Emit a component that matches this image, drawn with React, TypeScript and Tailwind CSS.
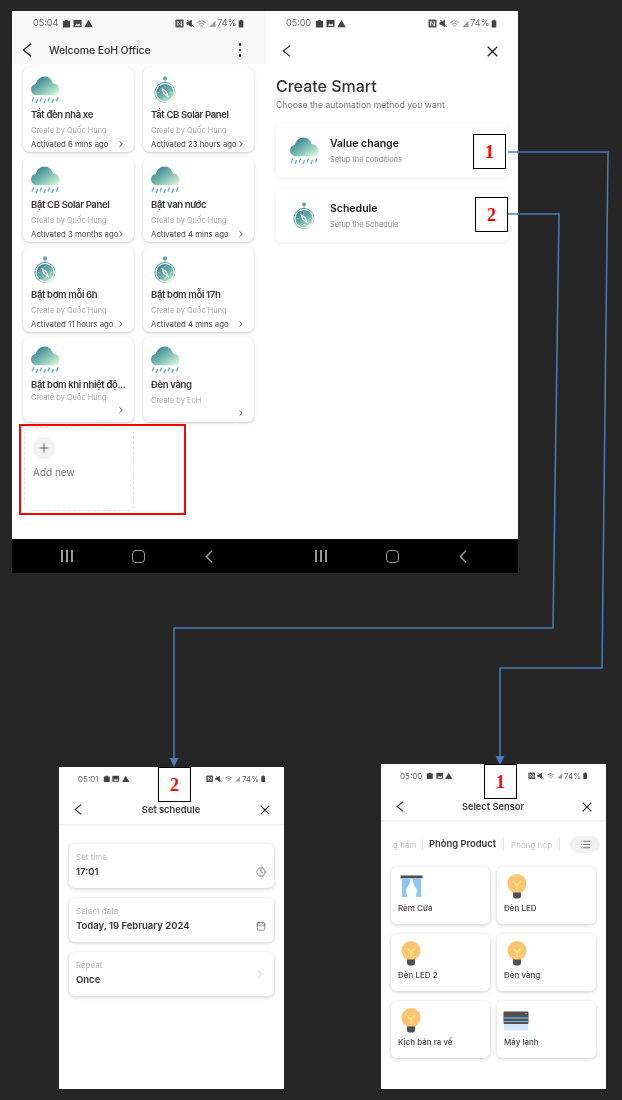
import React, { useId } from "react";
import { ChevronRight, Clock, Calendar, List, Plus } from "lucide-react";

function Cloud({ w = 30 }: { w?: number }) {
  const id = useId();
  return (
    <svg width={w} height={w * 0.96} viewBox="0 0 30 29" className="block shrink-0">
      <defs>
        <linearGradient id={id} x1="0.1" y1="0.1" x2="0.95" y2="0.9">
          <stop offset="0" stopColor="#2f7a97" />
          <stop offset="0.5" stopColor="#78b9ae" />
          <stop offset="1" stopColor="#d2f6d8" />
        </linearGradient>
      </defs>
      <path d="M6 20 C2.5 20 0 17.4 0 14 C0 10.8 2.2 8.6 5 8.4 C6 3.6 9.8 0.4 14 0.4 C18.4 0.4 21.8 3.6 22.6 7.6 C26.8 8 29.6 10.8 29.6 14.2 C29.6 17.4 27 20 24 20 Z" fill={`url(#${id})`} />
      <g stroke="#62aab0" strokeWidth="1.4" strokeLinecap="round">
        <path d="M2.6 23 L1.2 26" />
        <path d="M6.6 24.4 L5.4 27.8" />
        <path d="M10.8 23 L9.6 26" />
        <path d="M14.8 24.6 L13.6 28" />
        <path d="M19 23 L17.8 26" />
        <path d="M23 24.4 L21.8 27.8" />
        <path d="M28 22.6 L26.6 26" />
      </g>
    </svg>
  );
}

function Compass({ w = 24 }: { w?: number }) {
  const id = useId();
  return (
    <svg width={w} height={w * 1.25} viewBox="0 0 24 30" className="block shrink-0">
      <defs>
        <linearGradient id={id} x1="0.1" y1="0" x2="0.8" y2="1">
          <stop offset="0" stopColor="#2f7a97" />
          <stop offset="0.6" stopColor="#70b3ac" />
          <stop offset="1" stopColor="#c9f0cf" />
        </linearGradient>
      </defs>
      <circle cx="12" cy="2.6" r="2.2" fill="#5fa6b4" />
      <path d="M12 4.5 V7" stroke="#9cc6c8" strokeWidth="1.2" />
      <circle cx="12" cy="18" r="11" fill="none" stroke={`url(#${id})`} strokeWidth="1" />
      <circle cx="12" cy="18" r="9.4" fill={`url(#${id})`} />
      <path d="M7.8 12.6 L14 16.6 L16.2 23.4 L10 19.4 Z" fill="#fff" opacity="0.92" />
      <path d="M10.4 16 L13.6 20" stroke="#4f95a4" strokeWidth="1" />
      <circle cx="12" cy="11.2" r="0.6" fill="#fff" />
      <circle cx="18.8" cy="18" r="0.6" fill="#fff" />
      <circle cx="5.2" cy="18" r="0.6" fill="#fff" />
      <circle cx="12" cy="24.8" r="0.6" fill="#fff" />
    </svg>
  );
}

function Bulb() {
  return (
    <svg width="20" height="25" viewBox="0 0 20 25" className="block shrink-0 ml-[3px]">
      <circle cx="10" cy="9.6" r="9.6" fill="#fcc573" />
      <path d="M6 19 H14 V17 L14 15 H6 Z" fill="#fcc573" />
      <path d="M5.6 7 L10 11.4 L14.4 7 M10 11.4 V18" fill="none" stroke="#fde27a" strokeWidth="1.6" />
      <path d="M6 18.4 H14 V21.6 Q14 24.6 11.6 24.6 H8.4 Q6 24.6 6 21.6 Z" fill="#4f4f4f" />
    </svg>
  );
}

function Curtain() {
  return (
    <svg width="23" height="23" viewBox="0 0 24 24" className="block shrink-0 ml-[2px]">
      <rect x="0.5" y="0.5" width="23" height="3" fill="#4f4f4f" />
      <path d="M2 3.5 H11 C10.8 9 8.6 13 6 15 L7.4 23 H2 Z" fill="#8ec5fb" />
      <path d="M22 3.5 H13 C13.2 9 15.4 13 18 15 L16.6 23 H22 Z" fill="#8ec5fb" />
    </svg>
  );
}

function AirCon() {
  return (
    <svg width="26" height="20" viewBox="0 0 26 20" className="block shrink-0 -ml-[1px]">
      <rect x="0.5" y="0.5" width="25" height="12.5" rx="1" fill="#4f4f4f" />
      <rect x="1" y="6.4" width="24" height="1.2" fill="#7fbcf5" />
      <rect x="1" y="10" width="24" height="1" fill="#7fbcf5" />
      <circle cx="23" cy="2.6" r="0.7" fill="#9fd0f8" />
      <path d="M1 13 H25 L25.6 19.6 H0.6 Z" fill="#cfe6fd" />
    </svg>
  );
}

function Back({ w, h }: { w: number; h: number }) {
  return (
    <svg width={w} height={h} viewBox="0 0 10 14" preserveAspectRatio="none" className="block shrink-0" fill="none">
      <path d="M9 0.8 L1.4 7 L9 13.2" stroke="#1f1f1f" strokeWidth="1.3" />
    </svg>
  );
}

function Close({ s }: { s: number }) {
  return (
    <svg width={s} height={s} viewBox="0 0 12 12" className="block shrink-0" fill="none">
      <path d="M0.8 0.8 L11.2 11.2 M11.2 0.8 L0.8 11.2" stroke="#1f1f1f" strokeWidth="1.4" />
    </svg>
  );
}

function StatusBar({ time, small = false, pl, pr }: { time: string; small?: boolean; pl: string; pr: string }) {
  const s = small ? 7.5 : 9;
  return (
    <div className={`flex items-center justify-between ${small ? "h-[23px]" : "h-6"} ${pl} ${pr}`}>
      <div className="flex items-center gap-[2px]">
        <span className={`${small ? "text-[8px] mr-[2px]" : "text-[9px] mr-[2px]"} text-[#666666]`}>{time}</span>
        <svg width={s} height={s} viewBox="0 0 10 10"><path d="M3.5 2 V1 H6.5 V2 H9 V9.5 H1 V2 Z" fill="#444" /></svg>
        <svg width={s} height={s} viewBox="0 0 10 10"><rect x="0.5" y="1" width="9" height="8" fill="#444" /><path d="M2 7.5 L4 5 L5.5 6.5 L7 5 L8.5 7.5 Z" fill="#fff" /></svg>
        <svg width={s} height={s} viewBox="0 0 10 10"><path d="M5 1 L9.8 9.2 H0.2 Z" fill="#444" /></svg>
      </div>
      <div className="flex items-center gap-[1.5px]">
        <svg width={s} height={s} viewBox="0 0 10 10"><rect x="0.5" y="0.5" width="9" height="9" rx="1" fill="#555" /><path d="M3 7.4 V2.6 L7 7.4 V2.6" stroke="#fff" strokeWidth="1" fill="none" /></svg>
        <svg width={s} height={s} viewBox="0 0 10 10"><path d="M1 4 H3 L6 1.5 V8.5 L3 6 H1 Z M1.5 1 L8.5 9" stroke="#444" fill="#444" /></svg>
        <svg width={s + 2} height={s} viewBox="0 0 11 10"><path d="M1 4 Q5.5 0 10 4 M2.6 6 Q5.5 3.4 8.4 6 M4.2 8 Q5.5 6.8 6.8 8" stroke="#777" fill="none" /></svg>
        <svg width={s - 2} height={s} viewBox="0 0 8 10"><path d="M7.5 1.5 V9 H0.5 Z" fill="#999" /></svg>
        <span className={`${small ? "text-[8px]" : "text-[9px]"} text-[#666666]`}>74%</span>
        <svg width={s - 3} height={s} viewBox="0 0 6 10"><path d="M2 0.8 H4 V1.6 H5.6 V9.4 H0.4 V1.6 H2 Z" fill="#444" /></svg>
      </div>
    </div>
  );
}

function SmartCard({ kind, title, by, act, tight = false, chev = "bottom-[3px]" }: { kind: "c" | "s"; title: string; by: string; act?: string; tight?: boolean; chev?: string }) {
  return (
    <div className="relative h-[85px] rounded-[7px] bg-white shadow-[0_1px_3px_rgba(0,0,0,0.22)] pl-2 pt-2">
      <div className="h-[29px] flex items-center">
        {kind === "c" ? <Cloud w={29} /> : <div className="pl-[3px]"><Compass w={22} /></div>}
      </div>
      <div className="mt-[5px] text-[9.5px] leading-3 font-semibold tracking-[-0.35px] text-[#333333] whitespace-nowrap">{title}</div>
      <div className={`${tight ? "mt-[1px]" : "mt-1"} text-[7.4px] leading-3 text-[#aaaaaa] whitespace-nowrap`}>{by}</div>
      {act && <div className="mt-[1px] text-[7.8px] leading-3 text-[#444444] whitespace-nowrap">{act}</div>}
      <ChevronRight className={`absolute right-[8px] ${chev} text-[#444444]`} size={10} strokeWidth={2} />
    </div>
  );
}

function MethodCard({ icon, title, sub }: { icon: React.ReactNode; title: string; sub: string }) {
  return (
    <div className="h-[53px] rounded-[6px] bg-white shadow-[0_1px_4px_rgba(0,0,0,0.08)] flex items-center">
      <div className="w-[54px] flex justify-center pl-[2px]">{icon}</div>
      <div>
        <div className="text-[10.5px] leading-[14px] font-semibold text-[#1a1a1a]">{title}</div>
        <div className="mt-[4px] text-[7.4px] leading-[10px] text-[#888888]">{sub}</div>
      </div>
    </div>
  );
}

function FieldCard({ label, value, icon, top = "top-[23px]" }: { label: string; value: string; icon: React.ReactNode; top?: string }) {
  return (
    <div className="relative h-[44px] rounded-[6px] bg-white shadow-[0_1px_4px_rgba(0,0,0,0.2)] pl-[7px] pt-[8px]">
      <div className="text-[8px] leading-[11px] text-[#b5b5b5]">{label}</div>
      <div className="mt-[2px] text-[9.5px] leading-[13px] font-semibold text-[#333333]">{value}</div>
      <div className={`absolute right-[8px] ${top}`}>{icon}</div>
    </div>
  );
}

function SensorCard({ icon, label }: { icon: React.ReactNode; label: string }) {
  return (
    <div className="h-[57px] rounded-[6px] bg-white shadow-[0_1px_4px_rgba(0,0,0,0.2)] pl-[7px] pt-[7px] flex flex-col">
      <div className="h-[25px] flex items-center">{icon}</div>
      <div className="mt-[4px] text-[8px] leading-[11px] font-medium text-[#444444]">{label}</div>
    </div>
  );
}

function NavBar() {
  return (
    <div className="h-[34px] bg-black flex items-center pl-[49px]">
      <div className="flex gap-[3px]">
        <span className="w-[2px] h-[12px] bg-[#9a9a9a]" />
        <span className="w-[2px] h-[12px] bg-[#9a9a9a]" />
        <span className="w-[2px] h-[12px] bg-[#9a9a9a]" />
      </div>
      <div className="ml-[59px] w-[13px] h-[13px] border-[1.5px] border-[#9a9a9a] rounded-[4px]" />
      <svg width="8" height="13" viewBox="0 0 8 13" fill="none" className="ml-[60px]">
        <path d="M7 0.8 L1.4 6.5 L7 12.2" stroke="#9a9a9a" strokeWidth="1.5" />
      </svg>
    </div>
  );
}

function NumBox({ n, cls }: { n: string; cls: string }) {
  return (
    <div className={`absolute ${cls} w-[33px] h-[35px] bg-white border border-black flex items-center justify-center pt-[1px] font-['Liberation_Serif',serif] font-bold text-[18px] text-[#ff0000]`}>
      {n}
    </div>
  );
}

export default function App() {
  return (
    <div className="relative w-[622px] h-[1100px] overflow-hidden bg-[#262626] font-['Inter',sans-serif] pt-[11px] pl-[12px]">
      <div className="flex">
        {/* Phone 1 */}
        <div className="w-[254px] h-[562px] bg-white flex flex-col blur-[0.3px]">
          <div className="h-[53px] bg-[#f8f8f8]">
            <StatusBar time="05:04" pl="pl-[21px]" pr="pr-[22px]" />
            <div className="flex items-center h-[30px] pl-[10px] pr-[25px]">
              <Back w={10} h={14} />
              <span className="ml-[17px] pt-[1px] text-[10.5px] font-medium tracking-[-0.1px] text-[#333333]">Welcome EoH Office</span>
              <span className="ml-auto flex flex-col gap-[3px]">
                <span className="w-[2.5px] h-[2.5px] rounded-full bg-[#222222]" />
                <span className="w-[2.5px] h-[2.5px] rounded-full bg-[#222222]" />
                <span className="w-[2.5px] h-[2.5px] rounded-full bg-[#222222]" />
              </span>
            </div>
          </div>
          <div className="flex-1 pl-[11px] pr-[12px] pt-[3px] grid grid-cols-[111px_111px] gap-x-[9px] gap-y-[5px] content-start">
            <SmartCard kind="c" title="Tắt đèn nhà xe" by="Create by Quốc Hùng" act="Activated 6 mins ago" />
            <SmartCard kind="s" title="Tắt CB Solar Panel" by="Create by Quốc Hùng" act="Activated 23 hours ago" />
            <SmartCard kind="c" title="Bật CB Solar Panel" by="Create by Quốc Hùng" act="Activated 3 months ago" />
            <SmartCard kind="c" title="Bật van nước" by="Create by Quốc Hùng" act="Activated 4 mins ago" />
            <SmartCard kind="s" title="Bật bơm mỗi 6h" by="Create by Quốc Hùng" act="Activated 11 hours ago" />
            <SmartCard kind="s" title="Bật bơm mỗi 17h" by="Create by Quốc Hùng" act="Activated 4 mins ago" />
            <SmartCard kind="c" title="Bật bơm khi nhiệt độ..." by="Create by Quốc Hùng" tight chev="bottom-[7px]" />
            <SmartCard kind="c" title="Đèn vàng" by="Create by EoH" chev="bottom-[4px]" />
            <div className="h-[84px] ml-[1px] rounded-[6px] border border-dashed border-[#e2e2e2] pl-[8px] pt-[9px]">
              <div className="w-[22px] h-[22px] rounded-full bg-[#f1f1f1] flex items-center justify-center">
                <Plus size={14} strokeWidth={1.4} className="text-[#444444]" />
              </div>
              <div className="mt-[6px] text-[10px] leading-[14px] text-[#777777]">Add new</div>
            </div>
          </div>
          <NavBar />
        </div>
        {/* Phone 2 */}
        <div className="w-[252px] h-[562px] bg-white flex flex-col blur-[0.3px]">
          <StatusBar time="05:00" pl="pl-[20px]" pr="pr-[21px]" />
          <div className="flex items-center justify-between h-[32px] pl-[16px] pr-[20px]">
            <Back w={9} h={12} />
            <Close s={11} />
          </div>
          <div className="pl-[10px] mt-[7px] text-[16px] leading-[24px] font-medium text-[#333333]">Create Smart</div>
          <div className="pl-[10px] mt-[1px] text-[8.7px] leading-[13px] text-[#777777]">Choose the automation method you want</div>
          <div className="mx-[10px] mt-[12px] flex flex-col gap-[12px]">
            <MethodCard icon={<Cloud w={29} />} title="Value change" sub="Setup the conditions" />
            <MethodCard icon={<Compass w={22} />} title="Schedule" sub="Setup the Schedule" />
          </div>
          <div className="flex-1" />
          <NavBar />
        </div>
      </div>

      <div className="flex items-start mt-[191px] ml-[47px]">
        {/* Phone 3 */}
        <div className="w-[225px] h-[322px] mt-[3px] bg-white flex flex-col blur-[0.3px]">
          <div className="h-[57px] shadow-[0_1px_2px_rgba(0,0,0,0.1)]">
            <StatusBar time="05:01" small pl="pl-[19px]" pr="pr-[19px]" />
            <div className="flex items-center justify-between h-[27px] mt-[6px] pl-[15px] pr-[14px]">
              <Back w={8} h={11} />
              <span className="text-[9.3px] font-semibold text-[#333333]">Set schedule</span>
              <Close s={10} />
            </div>
          </div>
          <div className="px-[10px] pt-[20px] flex flex-col gap-[10px]">
            <FieldCard label="Set time" value="17:01" icon={<Clock size={10} strokeWidth={1.5} className="text-[#444444]" />} />
            <FieldCard label="Select date" value="Today, 19 February 2024" icon={<Calendar size={10} strokeWidth={1.5} className="text-[#444444]" />} />
            <FieldCard label="Repeat" value="Once" top="top-[16px]" icon={<ChevronRight size={12} strokeWidth={1.4} className="text-[#aaaaaa]" />} />
          </div>
        </div>
        {/* Phone 4 */}
        <div className="w-[225px] h-[325px] ml-[97px] bg-white flex flex-col blur-[0.3px]">
          <div className="h-[58px] border-b-2 border-[#f1f1f1]">
            <StatusBar time="05:00" small pl="pl-[19px]" pr="pr-[19px]" />
            <div className="flex items-center justify-between h-[27px] mt-[6px] pl-[15px] pr-[14px]">
              <Back w={8} h={11} />
              <span className="text-[9.3px] font-semibold text-[#333333]">Select Sensor</span>
              <Close s={10} />
            </div>
          </div>
          <div className="relative h-[45px] flex items-center pl-[12px] pr-[6px] text-[8px]">
            <span className="w-[24px] overflow-hidden whitespace-nowrap text-[#c4c4c4] mr-[5px]">g hầm</span>
            <span className="w-px h-[13px] bg-[#ececec] mr-[6px]" />
            <span className="text-[9.4px] font-semibold text-[#333333] whitespace-nowrap">Phòng Product</span>
            <span className="w-px h-[13px] bg-[#ececec] mx-[7px]" />
            <span className="text-[#c4c4c4] whitespace-nowrap">Phòng họp</span>
            <span className="w-px h-[13px] bg-[#ececec] ml-[7px]" />
            <span className="ml-auto w-[30px] h-[17px] rounded-full bg-[#f1f1f1] flex items-center justify-center">
              <List size={11} strokeWidth={1.5} className="text-[#444444]" />
            </span>
          </div>
          <div className="px-[10px] grid grid-cols-[99px_99px] gap-x-[7px] gap-y-[10px]">
            <SensorCard icon={<Curtain />} label="Rèm Cửa" />
            <SensorCard icon={<Bulb />} label="Đèn LED" />
            <SensorCard icon={<Bulb />} label="Đèn LED 2" />
            <SensorCard icon={<Bulb />} label="Đèn vàng" />
            <SensorCard icon={<Bulb />} label="Kịch bản ra về" />
            <SensorCard icon={<AirCon />} label="Máy lạnh" />
          </div>
        </div>
      </div>

      {/* Annotation overlays */}
      <div className="absolute left-[19px] top-[424px] w-[167px] h-[91px] border-2 border-[#ff0000]" />
      <svg className="absolute left-0 top-0" width="622" height="1100" viewBox="0 0 622 1100" fill="none">
        <path d="M508 152 H608 L602 668 H500 V757" stroke="#4a7ebb" strokeWidth="1.5" />
        <path d="M495.5 756 H504.5 L500 765 Z" fill="#4a7ebb" />
        <path d="M508 214 H559 L553 628 H174 V759" stroke="#4a7ebb" strokeWidth="1.5" />
        <path d="M169.5 758 H178.5 L174 767 Z" fill="#4a7ebb" />
      </svg>
      <NumBox n="1" cls="left-[473px] top-[134px]" />
      <NumBox n="2" cls="left-[475px] top-[197px]" />
      <NumBox n="2" cls="left-[158px] top-[767px]" />
      <NumBox n="1" cls="left-[484px] top-[764px]" />
    </div>
  );
}
